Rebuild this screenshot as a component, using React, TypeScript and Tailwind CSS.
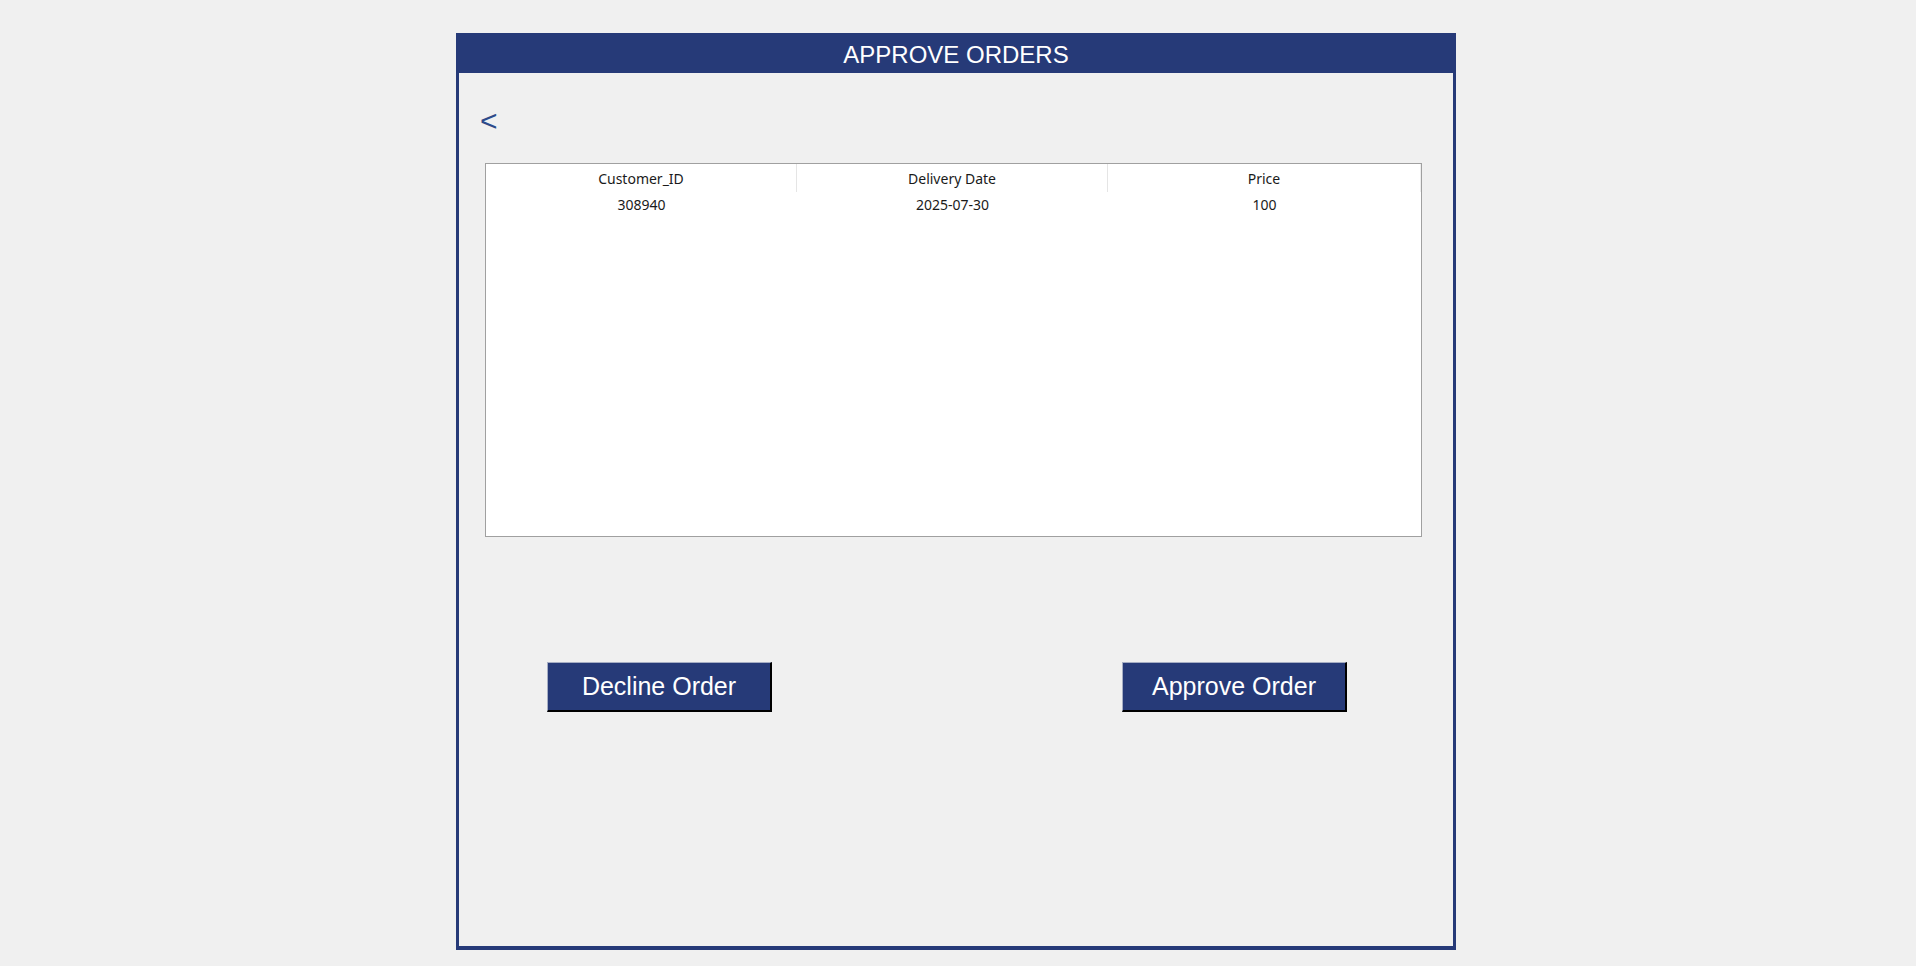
import React from "react";

const rows = [{ id: "308940", date: "2025-07-30", price: "100" }];

export default function App() {
  return (
    <div className="w-full h-[966px] bg-[#f0f0f0] pt-[33px]" style={{ fontFamily: '"Liberation Sans", Arial, sans-serif' }}>
      <div className="ml-[456px] w-[1000px] h-[917px] border-[3px] border-b-[4px] border-[#263a78] flex flex-col">
        <div className="h-[37px] bg-[#263a78] flex items-center justify-center text-white text-[24px] leading-none pt-[1px]">
          APPROVE ORDERS
        </div>
        <div className="flex-1 flex flex-col">
          <div className="pl-[21px] pt-[33px] h-[90px] text-[#2c4a8a] text-[30px] leading-none font-light">&lt;</div>
          <div className="ml-[26px] w-[937px] h-[374px] border border-[#a0a0a0] bg-white" style={{ fontFamily: '"Noto Sans", sans-serif' }}>
            <div className="grid grid-cols-[311px_311px_313px] h-[28px] text-[14px] text-[#1a1a1a]">
              <div className="flex items-center justify-center border-r border-[#e5e5e5]">Customer_ID</div>
              <div className="flex items-center justify-center border-r border-[#e5e5e5]">Delivery Date</div>
              <div className="flex items-center justify-center border-r border-[#eeeeee]">Price</div>
            </div>
            {rows.map((r) => (
              <div key={r.id} className="grid grid-cols-[311px_311px_313px] h-[24px] text-[14px] text-[#1a1a1a]">
                <div className="flex items-center justify-center">{r.id}</div>
                <div className="flex items-center justify-center">{r.date}</div>
                <div className="flex items-center justify-center">{r.price}</div>
              </div>
            ))}
          </div>
          <div className="flex pl-[88px] mt-[125px] gap-[350px]">
            <button className="w-[225px] h-[50px] bg-[#263a78] text-white text-[25px] leading-none border border-t-[#a6aec4] border-l-[#a6aec4] border-r-[2px] border-b-[2px] border-r-black border-b-black">
              Decline Order
            </button>
            <button className="w-[225px] h-[50px] bg-[#263a78] text-white text-[25px] leading-none border border-t-[#a6aec4] border-l-[#a6aec4] border-r-[2px] border-b-[2px] border-r-black border-b-black">
              Approve Order
            </button>
          </div>
        </div>
      </div>
    </div>
  );
}
